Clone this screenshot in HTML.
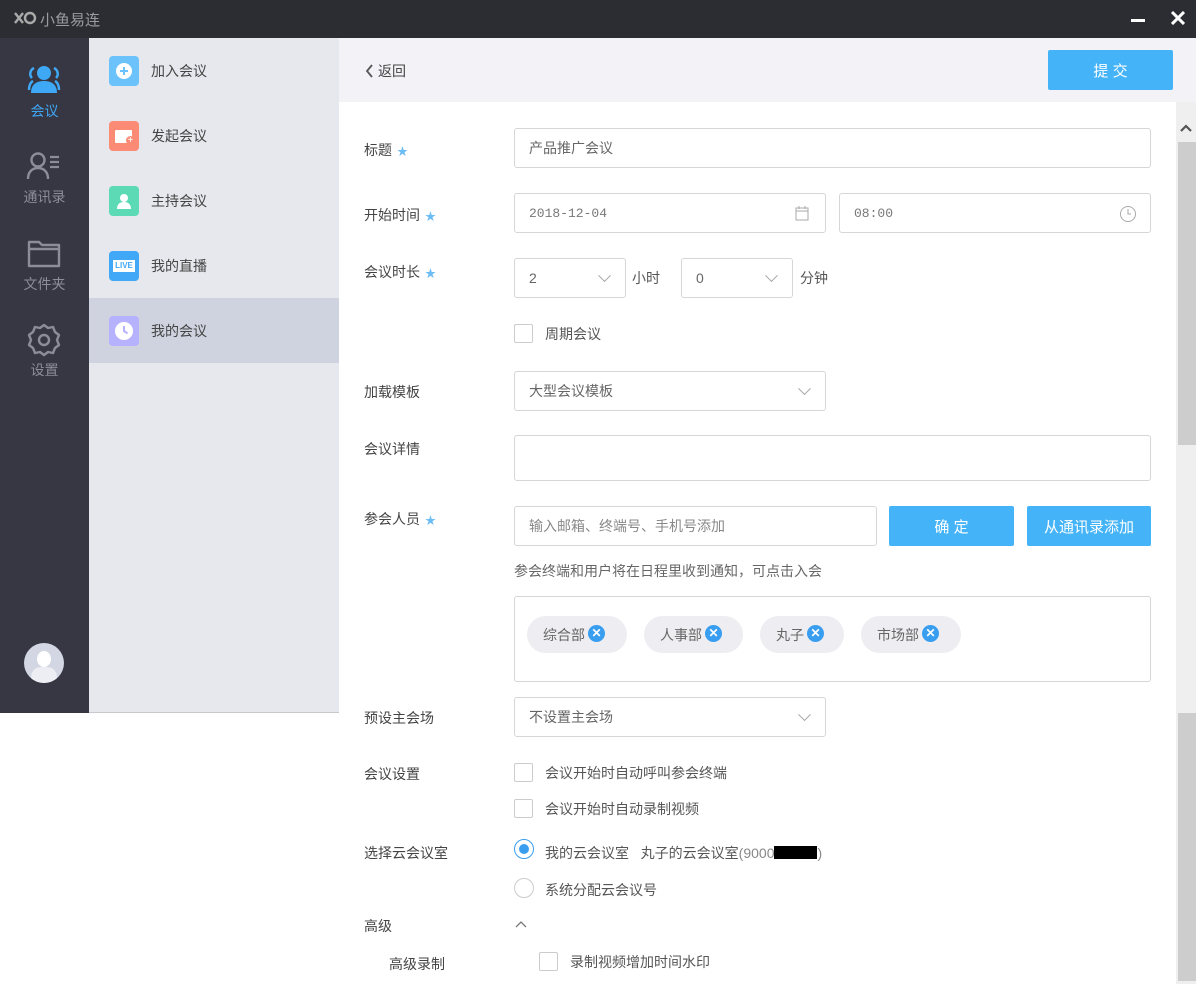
<!DOCTYPE html>
<html><head><meta charset="utf-8"><style>
*{margin:0;padding:0;box-sizing:border-box}
body{width:1196px;height:984px;position:relative;overflow:hidden;background:#fff;font-family:"Liberation Sans","Noto Sans CJK SC",sans-serif;font-size:14px;color:#555}
.a{position:absolute}
.lbl{position:absolute;left:364px;color:#444;font-size:14px}
.lbl i{color:#6cbcf5;font-style:normal;font-size:11px;margin-left:5px}
.inp{position:absolute;border:1px solid #d6d6d6;border-radius:3px;background:#fff;color:#666;font-size:14px;padding-left:14px;display:flex;align-items:center}
.chev{position:absolute;right:16px;top:50%;width:9px;height:9px;border-right:1px solid #aaa;border-bottom:1px solid #aaa;transform:translateY(-75%) rotate(45deg)}
.cb{position:absolute;width:19px;height:19px;border:1px solid #ccc;border-radius:2px;background:#fff}
.txt{position:absolute;color:#555;font-size:14px}
.btn{position:absolute;background:#45b3f8;color:#fff;border-radius:2px;display:flex;align-items:center;justify-content:center;font-size:15px}
.menu{position:absolute;left:89px;width:250px;height:65px}
.menu .ic{position:absolute;left:20px;top:18px;width:30px;height:30px;border-radius:4px}
.menu span{position:absolute;left:62px;top:23px;color:#444;font-size:14px}
.nav{position:absolute;left:0;width:89px;text-align:center;color:#8c8d98;font-size:14px}
.tag{position:absolute;top:616px;height:37px;background:#eeeef2;border-radius:19px;color:#666;font-size:14px;display:flex;align-items:center;padding-left:16px}
.x{display:inline-block;width:17px;height:17px;border-radius:50%;background:#3a9ef0;color:#fff;font-size:12px;line-height:17px;text-align:center;font-weight:bold;margin-left:3px;margin-top:-3px}
</style></head><body>
<div class="a" style="left:0;top:0;width:1196px;height:38px;background:#2c2d33"></div>
<svg class="a" style="left:13px;top:10px" width="24" height="18" viewBox="0 0 24 18"><path d="M2 3 L10 13 M10 3 L2 13" stroke="#aaa" stroke-width="2.4" fill="none"/><circle cx="17" cy="8" r="5" stroke="#aaa" stroke-width="2.4" fill="none"/></svg>
<div class="a" style="left:40px;top:9px;color:#9a9ba2;font-size:15px">小鱼易连</div>
<div class="a" style="left:1131px;top:19px;width:14px;height:3px;background:#fff"></div>
<svg class="a" style="left:1171px;top:11px" width="14" height="14"><path d="M1 1L13 13M13 1L1 13" stroke="#fff" stroke-width="3"/></svg>
<div class="a" style="left:0;top:38px;width:89px;height:675px;background:#373643"></div>
<svg class="a" style="left:25px;top:64px" width="38" height="30" viewBox="0 0 38 30"><circle cx="19" cy="9" r="7" fill="#3ea8f5"/><path d="M6 29c0-9 6-12 13-12s13 3 13 12z" fill="#3ea8f5"/><path d="M9 4c-4 2-5 7-2 10M4 26c0-5 2-8 4-9M29 4c4 2 5 7 2 10M34 26c0-5-2-8-4-9" stroke="#3ea8f5" stroke-width="2.5" fill="none"/></svg>
<div class="nav" style="top:101px;color:#3ea8f5">会议</div>
<svg class="a" style="left:26px;top:152px" width="36" height="28" viewBox="0 0 36 28"><circle cx="12" cy="8" r="6.5" stroke="#8c8d98" stroke-width="2.4" fill="none"/><path d="M2 27c0-7 4-11 10-11s10 4 10 11" stroke="#8c8d98" stroke-width="2.4" fill="none"/><path d="M24 5h9M24 10h9M24 15h9" stroke="#8c8d98" stroke-width="2.2"/></svg>
<div class="nav" style="top:187px">通讯录</div>
<svg class="a" style="left:27px;top:238px" width="34" height="30" viewBox="0 0 34 30"><path d="M2 4h10l3 3h17v21H2z M2 11h30" stroke="#8c8d98" stroke-width="2.4" fill="none" stroke-linejoin="round"/></svg>
<div class="nav" style="top:274px">文件夹</div>
<svg class="a" style="left:27px;top:323px" width="34" height="34" viewBox="0 0 34 34"><path d="M17 2l4 3 5-1 2 5 4 3-2 5 2 5-4 3-2 5-5-1-4 3-4-3-5 1-2-5-4-3 2-5-2-5 4-3 2-5 5 1z" stroke="#8c8d98" stroke-width="2.4" fill="none" stroke-linejoin="round"/><circle cx="17" cy="17" r="5" stroke="#8c8d98" stroke-width="2.4" fill="none"/></svg>
<div class="nav" style="top:360px">设置</div>
<div class="a" style="left:24px;top:643px;width:40px;height:40px;border-radius:50%;background:#d3d7e3;overflow:hidden"><div class="a" style="left:13px;top:8px;width:14px;height:16px;border-radius:50%;background:#fff"></div><div class="a" style="left:7px;top:24px;width:26px;height:20px;border-radius:10px 10px 0 0;background:#eceef4"></div></div>
<div class="a" style="left:89px;top:38px;width:250px;height:675px;background:#e7e8ed;border-bottom:1px solid #c8c8cc"></div>
<div class="menu" style="top:38px"><div class="ic" style="background:#6cc3fb"><div class="a" style="left:7px;top:7px;width:16px;height:16px;border-radius:50%;background:#fff"></div><div class="a" style="left:11px;top:14px;width:8px;height:2px;background:#6cc3fb"></div><div class="a" style="left:14px;top:11px;width:2px;height:8px;background:#6cc3fb"></div></div><span>加入会议</span></div>
<div class="menu" style="top:103px"><div class="ic" style="background:#fb8b74"><div class="a" style="left:6px;top:9px;width:17px;height:13px;background:#fff;border-radius:1px"></div><div class="a" style="left:17px;top:15px;width:9px;height:9px;border-radius:50%;background:#fb8b74;color:#fff;font-size:10px;line-height:9px;text-align:center">+</div></div><span>发起会议</span></div>
<div class="menu" style="top:168px"><div class="ic" style="background:#5cd9b5"><svg class="a" style="left:5px;top:6px" width="20" height="18" viewBox="0 0 20 18"><circle cx="10" cy="6" r="4" fill="#fff"/><path d="M3 17c0-5 3-7 7-7s7 2 7 7z" fill="#fff"/></svg></div><span>主持会议</span></div>
<div class="menu" style="top:233px"><div class="ic" style="background:#40a8f6"><div class="a" style="left:4px;top:9px;width:22px;height:12px;background:#fff;color:#40a8f6;font-size:8px;font-weight:bold;line-height:12px;text-align:center">LIVE</div></div><span>我的直播</span></div>
<div class="menu" style="top:298px;background:#ced3df"><div class="ic" style="background:#b6b2fd"><div class="a" style="left:6px;top:6px;width:18px;height:18px;border-radius:50%;background:#fff"></div><div class="a" style="left:14px;top:10px;width:2px;height:6px;background:#b6b2fd"></div><div class="a" style="left:14px;top:15px;width:5px;height:2px;background:#b6b2fd;transform:rotate(35deg)"></div></div><span>我的会议</span></div>
<div class="a" style="left:339px;top:38px;width:857px;height:64px;background:#f3f3f7"></div>
<svg class="a" style="left:364px;top:63px" width="10" height="16"><path d="M8 2L3 8L8 14" stroke="#555" stroke-width="1.8" fill="none"/></svg>
<div class="a" style="left:378px;top:61px;color:#444;font-size:14px">返回</div>
<div class="btn" style="left:1048px;top:50px;width:125px;height:40px;font-size:15px">提 交</div>
<div class="a" style="left:1176px;top:102px;width:20px;height:882px;background:#efefef"></div>
<svg class="a" style="left:1179px;top:123px" width="14" height="10"><path d="M2 8L7 3L12 8" stroke="#555" stroke-width="2.2" fill="none"/></svg>
<div class="a" style="left:1178px;top:142px;width:18px;height:303px;background:#cdcdcd"></div>
<div class="a" style="left:1178px;top:713px;width:18px;height:268px;background:#cdcdcd"></div>
<div class="lbl" style="top:140px">标题<i>★</i></div>
<div class="inp" style="left:514px;top:128px;width:637px;height:40px">产品推广会议</div>
<div class="lbl" style="top:205px">开始时间<i>★</i></div>
<div class="inp" style="left:514px;top:193px;width:312px;height:40px;font-family:'Liberation Mono',monospace;font-size:13px;color:#777">2018-12-04
<svg class="a" style="right:16px;top:12px" width="14" height="15"><rect x="1" y="2" width="12" height="12" fill="none" stroke="#aaa"/><path d="M1 5h12M4 0v3M10 0v3" stroke="#aaa"/></svg></div>
<div class="inp" style="left:839px;top:193px;width:312px;height:40px;font-family:'Liberation Mono',monospace;font-size:13px;color:#777">08:00
<svg class="a" style="right:13px;top:11px" width="18" height="18"><circle cx="9" cy="9" r="7.5" fill="none" stroke="#aaa"/><path d="M9 4v5h3" stroke="#aaa" fill="none"/></svg></div>
<div class="lbl" style="top:262px">会议时长<i>★</i></div>
<div class="inp" style="left:514px;top:258px;width:112px;height:40px">2<div class="chev"></div></div>
<div class="txt" style="left:632px;top:268px">小时</div>
<div class="inp" style="left:681px;top:258px;width:112px;height:40px">0<div class="chev"></div></div>
<div class="txt" style="left:800px;top:268px">分钟</div>
<div class="cb" style="left:514px;top:324px"></div>
<div class="txt" style="left:545px;top:324px">周期会议</div>
<div class="lbl" style="top:382px">加载模板</div>
<div class="inp" style="left:514px;top:371px;width:312px;height:40px">大型会议模板<div class="chev"></div></div>
<div class="lbl" style="top:439px">会议详情</div>
<div class="inp" style="left:514px;top:435px;width:637px;height:46px"></div>
<div class="lbl" style="top:509px">参会人员<i>★</i></div>
<div class="inp" style="left:514px;top:506px;width:363px;height:40px;color:#888">输入邮箱、终端号、手机号添加</div>
<div class="btn" style="left:889px;top:506px;width:125px;height:40px">确 定</div>
<div class="btn" style="left:1027px;top:506px;width:124px;height:40px">从通讯录添加</div>
<div class="txt" style="left:514px;top:561px;color:#666">参会终端和用户将在日程里收到通知，可点击入会</div>
<div class="inp" style="left:514px;top:596px;width:637px;height:86px"></div>
<div class="tag" style="left:527px;width:100px">综合部<span class="x">✕</span></div>
<div class="tag" style="left:644px;width:99px">人事部<span class="x">✕</span></div>
<div class="tag" style="left:760px;width:84px">丸子<span class="x">✕</span></div>
<div class="tag" style="left:861px;width:100px">市场部<span class="x">✕</span></div>
<div class="lbl" style="top:708px">预设主会场</div>
<div class="inp" style="left:514px;top:697px;width:312px;height:40px">不设置主会场<div class="chev"></div></div>
<div class="lbl" style="top:764px">会议设置</div>
<div class="cb" style="left:514px;top:763px"></div>
<div class="txt" style="left:545px;top:763px">会议开始时自动呼叫参会终端</div>
<div class="cb" style="left:514px;top:799px"></div>
<div class="txt" style="left:545px;top:799px">会议开始时自动录制视频</div>
<div class="lbl" style="top:843px">选择云会议室</div>
<div class="a" style="left:514px;top:839px;width:20px;height:20px;border-radius:50%;border:1px solid #3a9ef0"><div class="a" style="left:4px;top:4px;width:10px;height:10px;border-radius:50%;background:#3a9ef0"></div></div>
<div class="txt" style="left:545px;top:843px">我的云会议室&nbsp;&nbsp;&nbsp;丸子的云会议室<span style="color:#888">(9000</span><span style="display:inline-block;width:43px;height:13px;background:#000;vertical-align:-1px"></span><span style="color:#888">)</span></div>
<div class="a" style="left:514px;top:878px;width:20px;height:20px;border-radius:50%;border:1px solid #ccc"></div>
<div class="txt" style="left:545px;top:880px">系统分配云会议号</div>
<div class="lbl" style="top:916px">高级</div>
<svg class="a" style="left:514px;top:919px" width="14" height="10"><path d="M2 8L7 3L12 8" stroke="#777" stroke-width="1.3" fill="none"/></svg>
<div class="lbl" style="left:389px;top:954px">高级录制</div>
<div class="cb" style="left:539px;top:952px"></div>
<div class="txt" style="left:570px;top:952px">录制视频增加时间水印</div>
</body></html>
